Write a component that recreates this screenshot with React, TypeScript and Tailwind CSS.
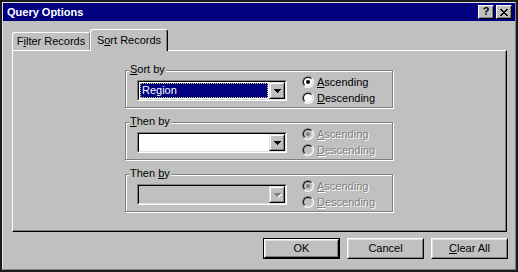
import type { ReactNode } from "react"

function Radio({ checked, disabled }: { checked?: boolean; disabled?: boolean }) {
  return (
    <span className="block w-3 h-3 shrink-0 rounded-full border border-t-[#808080] border-l-[#808080] border-b-white border-r-white">
      <span
        className={`flex items-center justify-center w-full h-full rounded-full border border-t-black border-l-black border-b-[#dfdfdf] border-r-[#dfdfdf] ${
          disabled ? "bg-[#c0c0c0]" : "bg-white"
        }`}
      >
        {checked && <span className={`block w-1 h-1 rounded-full ${disabled ? "bg-[#808080]" : "bg-black"}`} />}
      </span>
    </span>
  )
}

function Option({ label, checked, disabled }: { label: string; checked?: boolean; disabled?: boolean }) {
  return (
    <div className="flex items-center h-4 gap-[3px]">
      <Radio checked={checked} disabled={disabled} />
      <span className={disabled ? "text-[#808080] [text-shadow:1px_1px_0_#fff]" : "text-black"}>
        <u>{label[0]}</u>
        {label.slice(1)}
      </span>
    </div>
  )
}

function Arrow({ disabled }: { disabled?: boolean }) {
  return (
    <svg width="7" height="4" viewBox="0 0 7 4" className={disabled ? "[filter:drop-shadow(1px_1px_0_#fff)]" : ""}>
      <path d="M0 0h7v1H0zM1 1h5v1H1zM2 2h3v1H2zM3 3h1v1H3z" fill={disabled ? "#808080" : "#000"} />
    </svg>
  )
}

function Combo({ value, disabled }: { value?: string; disabled?: boolean }) {
  return (
    <div className="w-[150px] h-[21px] shrink-0 border border-t-[#808080] border-l-[#808080] border-b-white border-r-white">
      <div
        className={`flex h-full border border-t-black border-l-black border-b-[#dfdfdf] border-r-[#dfdfdf] ${
          disabled ? "bg-[#c0c0c0]" : "bg-white"
        }`}
      >
        <div className="flex-1 p-px">
          {value && (
            <div className="h-full bg-[#000080] text-white border border-dotted border-[#d8d870] pl-px leading-[13px]">
              {value}
            </div>
          )}
        </div>
        <div className="w-4 h-full bg-[#c0c0c0] border border-t-[#dfdfdf] border-l-[#dfdfdf] border-b-black border-r-black">
          <div className="flex h-full items-center justify-center border border-t-white border-l-white border-b-[#808080] border-r-[#808080]">
            <Arrow disabled={disabled} />
          </div>
        </div>
      </div>
    </div>
  )
}

function Group({ label, children }: { label: ReactNode; children: ReactNode }) {
  return (
    <div className="relative w-[268px] h-[38px] border border-[#808080] shadow-[inset_1px_1px_0_#fff,1px_1px_0_#fff]">
      <span className="absolute -top-[8px] left-[3px] px-px bg-[#c0c0c0] leading-[13px]">{label}</span>
      <div className="flex pl-[11px] pt-[3px] gap-[15px]">{children}</div>
    </div>
  )
}

function SortRow({
  label,
  value,
  disabled,
  optionsDisabled,
}: {
  label: ReactNode
  value?: string
  disabled?: boolean
  optionsDisabled?: boolean
}) {
  return (
    <Group label={label}>
      <div className="pt-[6px]">
        <Combo value={value} disabled={disabled} />
      </div>
      <div className="flex flex-col">
        <Option label="Ascending" checked disabled={optionsDisabled} />
        <Option label="Descending" disabled={optionsDisabled} />
      </div>
    </Group>
  )
}

function Button({ children, isDefault }: { children: ReactNode; isDefault?: boolean }) {
  return (
    <div className={`w-[77px] h-[21px] ${isDefault ? "border border-black" : ""}`}>
      <div className="h-full border border-t-white border-l-white border-b-black border-r-black">
        <div className="flex h-full items-center justify-center border border-t-[#dfdfdf] border-l-[#dfdfdf] border-b-[#808080] border-r-[#808080]">
          {children}
        </div>
      </div>
    </div>
  )
}

function TitleButton({ children }: { children: ReactNode }) {
  return (
    <div className="w-4 h-[14px] bg-[#c0c0c0] border border-t-white border-l-white border-b-black border-r-black">
      <div className="flex h-full items-center justify-center border border-t-[#c0c0c0] border-l-[#c0c0c0] border-b-[#808080] border-r-[#808080] text-black font-bold leading-none">
        {children}
      </div>
    </div>
  )
}

export default function App() {
  return (
    <div
      className="w-[518px] h-[272px] bg-[#c0c0c0] border-2 border-[#1c1c1c] text-[11px] text-black"
      style={{ fontFamily: '"Liberation Sans", Arial, sans-serif' }}
    >
      <div className="flex flex-col h-full border border-t-[#dfdfdf] border-l-[#dfdfdf] border-b-[#808080] border-r-[#808080]">
        {/* title bar */}
        <div className="flex items-center h-[18px] bg-[#000080] pl-[4px] pr-[3px]">
          <span className="flex-1 text-white font-bold">Query Options</span>
          <div className="flex gap-[2px]">
            <TitleButton>
              <span className="text-[11px] -mt-px">?</span>
            </TitleButton>
            <TitleButton>
              <svg width="8" height="7" viewBox="0 0 8 7">
                <path
                  d="M0 0h2v1H0zM6 0h2v1H6zM1 1h2v1H1zM5 1h2v1H5zM2 2h4v1H2zM3 3h2v1H3zM2 4h4v1H2zM1 5h2v1H1zM5 5h2v1H5zM0 6h2v1H0zM6 6h2v1H6z"
                  fill="#000"
                />
              </svg>
            </TitleButton>
          </div>
        </div>

        <div className="flex flex-col pt-[8px] pl-[9px] pr-[8px]">
          {/* tabs */}
          <div className="flex items-end h-[21px]">
            <div className="w-[78px] h-[18px] flex items-center justify-center rounded-t-[3px] border-t border-l border-t-white border-l-white border-r border-r-[#808080]">
              F<u>i</u>lter Records
            </div>
            <div className="relative z-10 -mb-px w-[78px] h-[22px] flex items-center justify-center rounded-t-[3px] bg-[#c0c0c0] border-t border-l border-t-white border-l-white border-r border-r-black shadow-[inset_-1px_0_0_#808080]">
              S<u>o</u>rt Records
            </div>
          </div>

          {/* panel */}
          <div className="h-[182px] border border-t-white border-l-white border-b-black border-r-black shadow-[inset_-1px_-1px_0_#808080] pl-[112px] pt-[19px]">
            <div className="flex flex-col gap-[14px]">
              <SortRow
                label={
                  <>
                    <u>S</u>ort by
                  </>
                }
                value="Region"
              />
              <SortRow
                label={
                  <>
                    <u>T</u>hen by
                  </>
                }
                optionsDisabled
              />
              <SortRow
                label={
                  <>
                    Then <u>b</u>y
                  </>
                }
                disabled
                optionsDisabled
              />
            </div>
          </div>

          {/* buttons */}
          <div className="flex justify-end gap-[7px] mt-[6px] -mr-px">
            <Button isDefault>OK</Button>
            <Button>Cancel</Button>
            <Button>
              <span>
                <u>C</u>lear All
              </span>
            </Button>
          </div>
        </div>
      </div>
    </div>
  )
}
